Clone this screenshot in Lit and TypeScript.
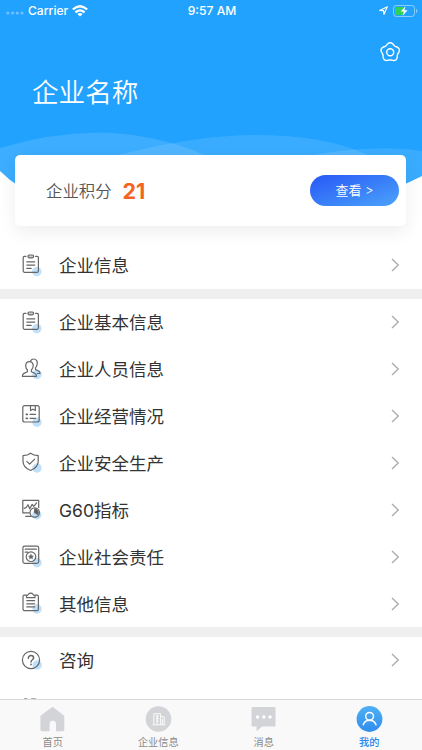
import { LitElement, html, svg, css } from "lit";
import { customElement } from "lit/decorators.js";
import { classMap } from "lit/directives/class-map.js";

const blob = (x: number, y: number) => svg`<circle cx=${x} cy=${y} r="4.7" fill="#bfe0fa" stroke="none"/>`;

// Five-lobed outline of the settings gear.
const gear =
  "M" +
  Array.from({ length: 90 }, (_, i) => {
    const a = (i / 90) * Math.PI * 2;
    const r = 8.6 + 0.9 * Math.cos(5 * a);
    return `${(10.2 + r * Math.sin(a)).toFixed(2)} ${(10.2 - r * Math.cos(a)).toFixed(2)}`;
  }).join("L") +
  "Z";

const clipboard = svg`${blob(16.8, 17.6)}
  <path d="M6 2.3H4.4Q3.2 2.3 3.2 3.5V17.1Q3.2 18.3 4.4 18.3H17.2Q18.4 18.3 18.4 17.1V3.5Q18.4 2.3 17.2 2.3H15.6"/>
  <rect x="8" y="1" width="5.6" height="2.8" rx="1.2" fill="#ccc"/>
  <path d="M6.8 7.8H14.8M6.8 11.1H14.8M6.8 14.4H11.2"/>`;

const icons = {
  clipboard,
  people: svg`${blob(17, 16.5)}
    <path d="M10.5 3C11.3 1.4 12.3 1 13.7 1C16.2 1 17.5 3 17.3 5.5C17.1 7.6 16.5 8.7 15.5 9.8V11.5L19 13.2Q20 13.8 20 15.5H17.5"/>
    <path d="M9.4 3.6C12 3.6 13.3 5.4 13.2 8C13.1 10 12.3 11.2 11.4 12V13.8L15.2 15.5Q16.4 16.2 16.5 18.3H2.4Q2.4 16.2 3.6 15.6L7.4 13.8V12C6.5 11.2 5.8 10 5.7 8C5.6 5.4 6.8 3.6 9.4 3.6Z"/>`,
  ledger: svg`${blob(17, 17.2)}
    <rect x="2.8" y="0.6" width="16.4" height="16.4" rx="2"/>
    <path d="M10.5 .8V5.6L12.9 4.2L15.3 5.6V.8M10 9.3H15.6M10 13.3H15.6"/>
    <path d="M6.3 9.3H7.3M6.3 13.3H7.3" stroke-width="1.7"/>`,
  shield: svg`${blob(17, 16)}
    <path d="M10.6 1.2C8.5 2.8 6 3.5 3 3.6V9.3C3 14 6.2 16.8 10.6 18.5C15 16.8 18.2 14 18.2 9.3V3.6C15.2 3.5 12.7 2.8 10.6 1.2Z"/>
    <path d="M6.8 9.3L9.7 12.2L14.6 7.1"/>`,
  chart: svg`${blob(16.8, 15.8)}
    <path d="M9.4 13.8H2.8V1.3H18.7V8.5M5.8 17.4H11"/>
    <path d="M4.2 9.4L6.2 8.5L8 5.7L9.7 9.8L12.2 5.4L13.7 7.3L16.6 3.9"/>
    <circle cx="14.7" cy="13.5" r="4.7"/>
    <path d="M14.7 10.2V13.5L17.5 15.3A3.3 3.3 0 0 0 14.7 10.2Z" fill="#555"/>`,
  certificate: svg`${blob(17, 16.7)}
    <rect x="2.9" y="0.2" width="15.8" height="17.2" rx="1.8"/>
    <path d="M5.2 3.2H16.4M5.2 6.2H7.7"/>
    <circle cx="11" cy="10.7" r="4.8"/>
    <path d="M11 8.2L11.8 9.8L13.5 10L12.3 11.2L12.6 13L11 12.1L9.4 13L9.7 11.2L8.5 10L10.2 9.8Z" fill="#666" stroke-width=".4"/>`,
  board: svg`${blob(17, 16)}
    <path d="M6.4 2.2H4.4Q3 2.2 3 3.7V16.3Q3 17.7 4.4 17.7H17Q18.4 17.7 18.4 16.3V3.7Q18.4 2.2 17 2.2H15"/>
    <path d="M6.5 4.6V2.7Q7.8 2.6 8.5 1.3Q9.2 .2 10.7 .2Q12.2 .2 12.9 1.3Q13.6 2.6 15 2.7V4.6Z"/>
    <path d="M6.8 7.7H14.6M6.8 10.8H14.6M6.8 13.9H14.6"/>`,
  question: svg`${blob(17.2, 16)}
    <circle cx="11" cy="11" r="8.6"/>
    <path d="M8.4 9.2C8.4 7.4 9.4 6.5 11 6.5C12.6 6.5 13.6 7.5 13.6 8.9C13.6 10.7 11 10.8 11 13" stroke-width="1.5"/>
    <path d="M11 15.4V15.8" stroke-width="1.6"/>`,
  link: svg`<path d="M3.2 5C3.2 2.2 8 2.2 8 5M11.5 3H15.7L17.4 6"/>`,
};

type Row = { icon: keyof typeof icons; label: string };

const groups: Row[][] = [
  [{ icon: "clipboard", label: "企业信息" }],
  [
    { icon: "clipboard", label: "企业基本信息" },
    { icon: "people", label: "企业人员信息" },
    { icon: "ledger", label: "企业经营情况" },
    { icon: "shield", label: "企业安全生产" },
    { icon: "chart", label: "G60指标" },
    { icon: "certificate", label: "企业社会责任" },
    { icon: "board", label: "其他信息" },
  ],
  [
    { icon: "question", label: "咨询" },
    { icon: "link", label: "关于我们" },
  ],
];

const tabs = [
  {
    label: "首页",
    art: svg`<path d="M13 1.2Q13.6 .8 14.2 1.2L24.6 9.3Q25.3 9.9 25.3 10.8V23.5Q25.3 25.3 23.5 25.3H17V18.2Q17 14.8 13.7 14.8Q10.6 14.8 10.6 18.2V25.3H3.2Q1.4 25.3 1.4 23.5V10.8Q1.4 9.9 2.1 9.3Z" fill="#d3d4d7"/>`,
  },
  {
    label: "企业信息",
    art: svg`<circle cx="13.5" cy="13" r="12.8" fill="#d3d4d7"/>
      <path d="M7.5 18.8H20.5M8.8 18.8V7.8H15.6V18.8M15.6 10.8H19.2V18.8M10.7 10.2H13.8M10.7 12.7H13.8M10.7 15.2H13.8M12.2 9V18.5M17.4 13V18.6" fill="none" stroke="#fff" stroke-width=".9"/>`,
  },
  {
    label: "消息",
    art: svg`<path d="M2.5 1H24.5Q25.5 1 25.5 2V19.6Q25.5 20.6 24.5 20.6H12L6.6 25.2V20.6H2.5Q1.5 20.6 1.5 19.6V2Q1.5 1 2.5 1Z" fill="#d3d4d7"/>
      <circle cx="7.6" cy="11" r="1.7" fill="#fff"/><circle cx="13.8" cy="11" r="1.7" fill="#fff"/><circle cx="20" cy="11" r="1.7" fill="#fff"/>`,
  },
  {
    label: "我的",
    active: true,
    art: svg`<defs><linearGradient id="me" x1="0" y1="0" x2="0" y2="1"><stop offset="0" stop-color="#4db1f5"/><stop offset="1" stop-color="#318cec"/></linearGradient></defs>
      <circle cx="13.5" cy="13" r="12.9" fill="url(#me)"/>
      <g fill="none" stroke="#fff" stroke-width="1.5" stroke-linecap="round"><circle cx="13.6" cy="10.3" r="3.9"/><path d="M7.2 18.7Q8.8 14.3 13.6 14.2Q18.4 14.3 20 18.7"/></g>`,
  },
];

@customElement("app-root")
export class AppRoot extends LitElement {
  static styles = css`
    :host {
      display: flex;
      flex-direction: column;
      width: 422px;
      height: 750px;
      overflow: hidden;
      background: #fff;
      color: #333;
      font-family: Inter, "Noto Sans CJK SC", sans-serif;
    }
    svg { display: block; overflow: visible; flex: none; }
    .page { flex: 1; min-height: 0; overflow: hidden; }
    .header { position: relative; height: 242px; }
    .waves { position: absolute; left: 0; top: 0; }
    .top { position: relative; height: 155px; color: #fff; }
    .status {
      display: grid;
      grid-template-columns: 1fr auto 1fr;
      align-items: center;
      height: 21px;
      padding: 0 4px 0 6px;
      font-size: 12.1px;
      font-weight: 500;
    }
    .left, .right { display: flex; align-items: center; }
    .left { gap: 4px; }
    .right { justify-content: flex-end; gap: 5px; }
    .tools { display: flex; justify-content: flex-end; height: 50px; padding: 21px 22px 0 0; box-sizing: border-box; }
    .company { margin: 0 0 0 32px; font-size: 26.6px; line-height: 43px; font-weight: 350; }
    .card {
      position: relative;
      display: flex;
      align-items: center;
      height: 71px;
      margin: 0 16px 0 15px;
      padding: 0 7px 0 31px;
      box-sizing: border-box;
      border-radius: 5px;
      background: #fff;
      box-shadow: 0 6px 18px rgba(0, 0, 0, 0.07);
    }
    .caption { font-size: 16.4px; line-height: 24px; font-weight: 350; color: #555; }
    .score { flex: 1; margin-left: 11px; font-size: 21.5px; font-weight: 700; color: #f5641e; }
    .view {
      width: 89px;
      height: 31px;
      padding: 0;
      border: 0;
      border-radius: 16px;
      background: linear-gradient(160deg, #2b5ff6 10%, #479cfa 90%);
      color: #fff;
      font: 350 13px/31px Inter, "Noto Sans CJK SC", sans-serif;
    }
    .group + .group { border-top: 10px solid #efefef; }
    .group:last-child { margin-top: -1px; }
    .row { display: flex; align-items: center; height: 47px; padding: 0 22px 0 20px; box-sizing: border-box; }
    .icon { fill: none; stroke: #666; stroke-width: 1.2; stroke-linecap: round; stroke-linejoin: round; }
    .label { flex: 1; margin-left: 15px; font-size: 17.5px; line-height: 24px; white-space: nowrap; }
    .arrow { margin-top: -2px; fill: none; stroke: #aaa; stroke-width: 1.3; }
    .tabs {
      display: grid;
      grid-template-columns: repeat(4, 1fr);
      height: 51px;
      box-sizing: border-box;
      border-top: 1px solid #dadada;
      background: #f9f9f9;
    }
    .tab { display: flex; flex-direction: column; align-items: center; padding-top: 6px; font-size: 10.2px; line-height: 15px; color: #8b8b8b; gap: 3px; }
    .active { color: #2a86ee; font-weight: 500; }
  `;

  render() {
    return html`
      <div class="page">
        <div class="header">
          <svg class="waves" width="422" height="192" viewBox="0 0 422 192">
            <path d="M0 0H422V176Q410 182 398 187H20Q9 180 0 171Z" fill="#22a2ff"/>
            <path d="M0 148Q50 133 98 132.5Q145 133 190 149L230 165H20V187Q9 180 0 171Z" fill="#fff" opacity=".12"/>
            <path d="M110 157Q195 135 255 135Q325 135 368 155V160H110Z" fill="#fff" opacity=".11"/>
            <path d="M310 156Q340 149 375 148.5Q400 147.5 422 151V176L398 187H310Z" fill="#fff" opacity=".11"/>
          </svg>
          <div class="top">
            <div class="status">
              <div class="left">
                <svg width="18" height="4" fill="#fff" opacity=".35"><circle cx="1.9" cy="4" r="1.6"/><circle cx="6.6" cy="4" r="1.6"/><circle cx="11.3" cy="4" r="1.6"/><circle cx="16" cy="4" r="1.6"/></svg>
                <span>Carrier</span>
                <svg width="16" height="12" viewBox="0 0 16 12" fill="none" stroke="#fff" stroke-width="2.2"><path d="M.8 4.5Q8-2 15.2 4.5M3.4 7.3Q8 3.3 12.6 7.3"/><path d="M5.4 9Q8 7.2 10.6 9L8 11.6Z" fill="#fff" stroke="none"/></svg>
              </div>
              <span>9:57 AM</span>
              <div class="right">
                <svg width="9" height="9" viewBox="0 0 9 9" fill="none" stroke="#fff" stroke-width="1.2" stroke-linejoin="round"><path d="M.7 4.5L8.3 .7L5 8.3L4.5 4.7Z"/></svg>
                <svg width="25" height="12" viewBox="0 0 25 12"><rect x=".5" y=".5" width="21" height="11" rx="2.8" fill="none" stroke="#fff" stroke-opacity=".45"/><rect x="2" y="2" width="8.5" height="8" rx="1.3" fill="#30d158"/><path d="M23 4V8Q24.5 7.3 24.5 6Q24.5 4.7 23 4Z" fill="#fff" opacity=".45"/><path d="M12.5 1.2L7.7 6.6H10.8L9.6 10.8L14.6 5.2H11.4Z" fill="#fff"/></svg>
              </div>
            </div>
            <div class="tools">
              <svg width="20" height="20" viewBox="0 0 20 20" fill="none" stroke="#fff" stroke-width="1.4" stroke-linejoin="round">
                <path d=${gear}/>
                <circle cx="10.2" cy="10.2" r="3.5"/>
              </svg>
            </div>
            <div class="company">企业名称</div>
          </div>
          <div class="card">
            <span class="caption">企业积分</span>
            <span class="score">21</span>
            <button class="view">查看 &gt;</button>
          </div>
        </div>
        ${groups.map((rows) => html`<div class="group">
          ${rows.map((row) => html`<div class="row">
            <svg class="icon" width="24" height="24" viewBox="0 0 24 24">${icons[row.icon]}</svg>
            <span class="label">${row.label}</span>
            <svg class="arrow" width="9" height="14" viewBox="0 0 9 14"><path d="M1 1L7.3 7L1 13"/></svg>
          </div>`)}
        </div>`)}
      </div>
      <div class="tabs">
        ${tabs.map((tab) => html`<div class=${classMap({ tab: true, active: !!tab.active })}>
          <svg width="27" height="26" viewBox="0 0 27 26">${tab.art}</svg>
          <span>${tab.label}</span>
        </div>`)}
      </div>
    `;
  }
}
